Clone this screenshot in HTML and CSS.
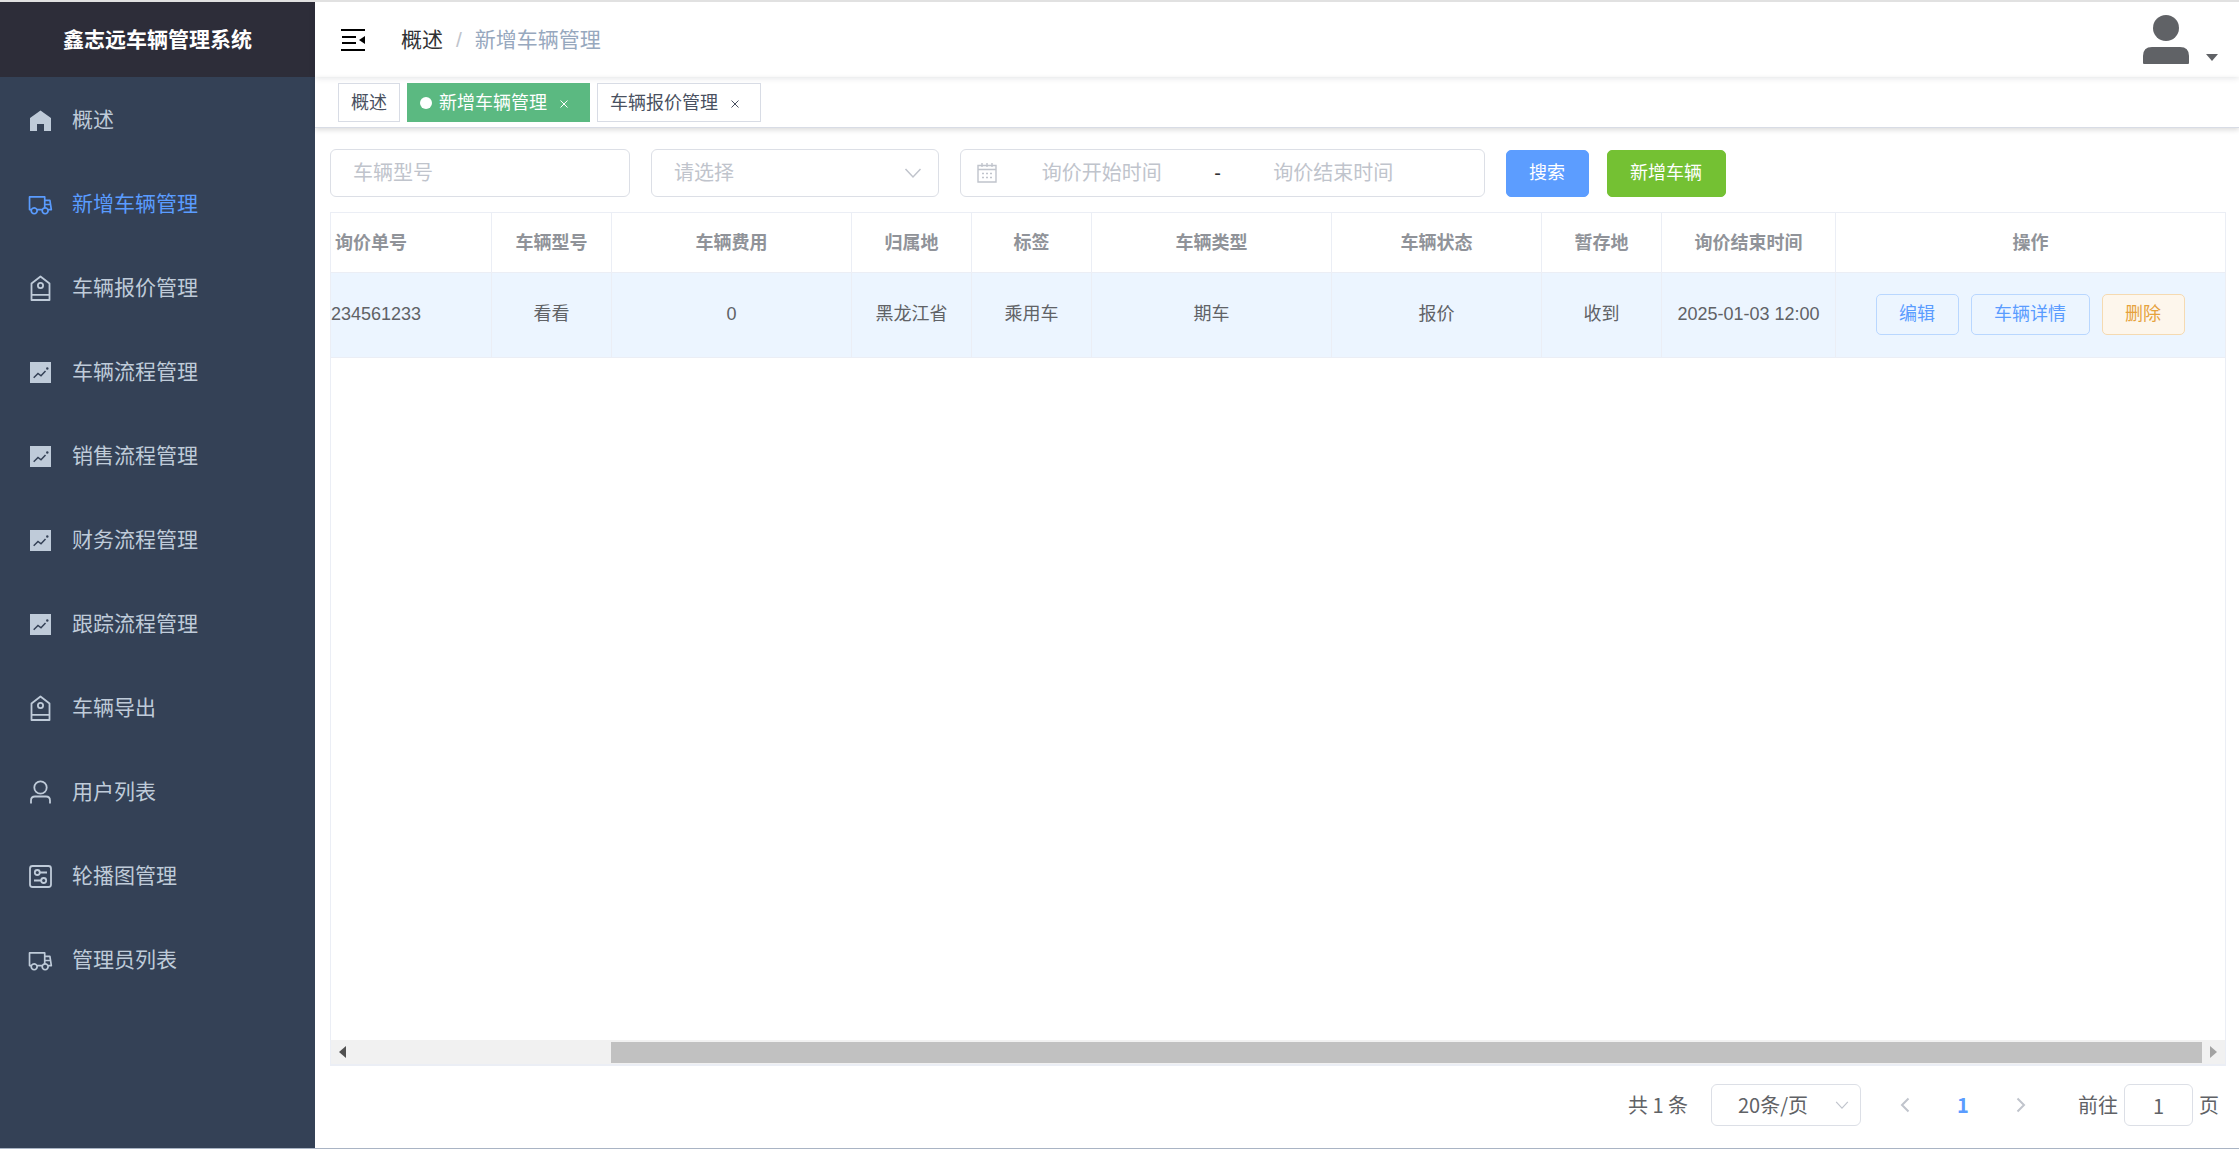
FILE: index.html
```html
<!DOCTYPE html>
<html lang="zh-CN">
<head>
<meta charset="utf-8">
<title>鑫志远车辆管理系统</title>
<link rel="stylesheet" href="styles.css">
</head>
<body>
<svg class="sprite" aria-hidden="true">
  <symbol id="i-home" viewBox="0 0 27 27"><path fill="currentColor" d="M13.500 3.500 24 11v13h-7v-7h-7v7H3V11z"/></symbol>
  <symbol id="i-van" viewBox="0 0 1024 1024"><path fill="currentColor" d="M128.896 736H96a32 32 0 0 1-32-32V224a32 32 0 0 1 32-32h576a32 32 0 0 1 32 32v96h164.544a32 32 0 0 1 31.616 27.136l54.144 352A32 32 0 0 1 922.688 736h-91.520a144 144 0 1 1-286.272 0H415.104a144 144 0 1 1-286.272 0zm23.360-64a143.872 143.872 0 0 1 239.488 0H568.320c17.088-25.600 42.240-45.376 71.744-55.808V256H128v416zm655.488 0h77.632l-19.648-128H704v64.896A144 144 0 0 1 807.744 672zm48.128-192-14.720-96H704v96h151.872zM688 832a80 80 0 1 0 0-160 80 80 0 0 0 0 160zm-416 0a80 80 0 1 0 0-160 80 80 0 0 0 0 160z"/></symbol>
  <symbol id="i-tag" viewBox="0 0 27 27"><g fill="none" stroke="currentColor" stroke-width="1.800" stroke-linejoin="round"><path d="M13.500 1.500 22.500 8.500V25h-18V8.500z M4.500 19.800h18"/><circle cx="13.500" cy="10.500" r="2.600"/></g></symbol>
  <symbol id="i-chart" viewBox="0 0 27 27"><path fill="currentColor" d="M3 3h21v21H3z"/><path fill="none" stroke="#344156" stroke-width="1.500" d="m6.700 18.800 4.300-4.300 3 2.300 4.500-4.700"/><circle cx="20.300" cy="9.500" r="1.200" fill="#344156"/></symbol>
  <symbol id="i-user" viewBox="0 0 27 27"><g fill="none" stroke="currentColor" stroke-width="1.800"><circle cx="13.500" cy="8.500" r="6.200"/><path d="M4 24.500v-3q0-4 4-4h11q4 0 4 4v3"/></g></symbol>
  <symbol id="i-setup" viewBox="0 0 27 27"><g fill="none" stroke="currentColor" stroke-width="1.800"><rect x="3" y="3" width="21" height="21" rx="2.500"/><circle cx="10.300" cy="9.500" r="2.500"/><path d="M12.800 9.500H20M7 17.500h7.200"/><circle cx="16.700" cy="17.500" r="2.500"/></g></symbol>
  <symbol id="i-x" viewBox="0 0 8 8"><path fill="none" stroke="currentColor" d="m.5.5 7 7m0-7-7 7"/></symbol>
  <symbol id="i-down" viewBox="0 0 18 18"><path fill="none" stroke="currentColor" stroke-width="1.500" d="m1.500 5 7.500 8 7.500-8"/></symbol>
</svg>

<aside class="sidebar">
  <h1 class="logo">鑫志远车辆管理系统</h1>
  <nav class="menu">
    <a href="#"><svg><use href="#i-home"/></svg>概述</a>
    <a href="#" class="active"><svg><use href="#i-van"/></svg>新增车辆管理</a>
    <a href="#"><svg><use href="#i-tag"/></svg>车辆报价管理</a>
    <a href="#"><svg><use href="#i-chart"/></svg>车辆流程管理</a>
    <a href="#"><svg><use href="#i-chart"/></svg>销售流程管理</a>
    <a href="#"><svg><use href="#i-chart"/></svg>财务流程管理</a>
    <a href="#"><svg><use href="#i-chart"/></svg>跟踪流程管理</a>
    <a href="#"><svg><use href="#i-tag"/></svg>车辆导出</a>
    <a href="#"><svg><use href="#i-user"/></svg>用户列表</a>
    <a href="#"><svg><use href="#i-setup"/></svg>轮播图管理</a>
    <a href="#"><svg><use href="#i-van"/></svg>管理员列表</a>
  </nav>
</aside>

<div class="page">
  <header class="navbar">
    <button class="fold" aria-label="收起菜单">
      <svg width="24" height="22" viewBox="0 0 24 22"><path d="M0 0h24v2H0zM1 7h14v2H1zM1 13h14v2H1zM0 20h24v2H0zM24 7v8l-6-4z"/></svg>
    </button>
    <nav class="crumbs"><a href="#">概述</a><span class="sep">/</span><span>新增车辆管理</span></nav>
    <button class="avatar" aria-label="用户菜单">
      <svg width="46" height="49" viewBox="0 0 46 49"><circle cx="23" cy="13" r="13"/><path d="M0 48V41q0-9 9-9h28q9 0 9 9v7q0 1-1 1H1q-1 0-1-1z"/></svg>
      <svg width="12" height="7" viewBox="0 0 12 7"><path d="M0 0h12L6 7z"/></svg>
    </button>
  </header>

  <nav class="tags">
    <a href="#" class="tag">概述</a>
    <a href="#" class="tag active"><i class="dot"></i>新增车辆管理<svg><use href="#i-x"/></svg></a>
    <a href="#" class="tag">车辆报价管理<svg><use href="#i-x"/></svg></a>
  </nav>

  <main class="content">
    <form class="filters">
      <input class="field model" type="text" placeholder="车辆型号" aria-label="车辆型号">
      <div class="select state">
        <select class="field" aria-label="请选择"><option>请选择</option></select>
        <svg><use href="#i-down"/></svg>
      </div>
      <div class="field range">
        <svg width="20" height="20" viewBox="0 0 20 20"><g fill="none" stroke="currentColor" stroke-width="1.400"><path d="M1 2.500h18V19H1zM1 6.500h18M5 0v4M10 0v4M15 0v4"/><path stroke-dasharray="2 2" d="M5 10.500h10M5 14.500h10"/></g></svg>
        <input type="text" placeholder="询价开始时间" aria-label="询价开始时间">
        <span>-</span>
        <input type="text" placeholder="询价结束时间" aria-label="询价结束时间">
      </div>
      <div class="actions">
        <button type="button" class="btn primary">搜索</button>
        <button type="button" class="btn success">新增车辆</button>
      </div>
    </form>

    <section class="table-box">
      <div class="table-body">
        <table>
          <colgroup><col class="c-no"><col class="c-s"><col class="c-l"><col class="c-s"><col class="c-s"><col class="c-l"><col class="c-m"><col class="c-s"><col class="c-time"><col></colgroup>
          <thead>
            <tr><th class="no">询价单号</th><th>车辆型号</th><th>车辆费用</th><th>归属地</th><th>标签</th><th>车辆类型</th><th>车辆状态</th><th>暂存地</th><th>询价结束时间</th><th>操作</th></tr>
          </thead>
          <tbody>
            <tr><td class="no">234561233</td><td>看看</td><td>0</td><td>黑龙江省</td><td>乘用车</td><td>期车</td><td>报价</td><td>收到</td><td>2025-01-03 12:00</td>
              <td><div class="ops"><button class="btn plain">编辑</button><button class="btn plain">车辆详情</button><button class="btn warn">删除</button></div></td></tr>
          </tbody>
        </table>
      </div>
      <div class="scrollbar">
        <svg width="7" height="12" viewBox="0 0 7 12"><path fill="#505050" d="M7 0v12L0 6z"/></svg>
        <div class="track"><div class="thumb"></div></div>
        <svg width="7" height="12" viewBox="0 0 7 12"><path fill="#a3a3a3" d="M0 0v12l7-6z"/></svg>
      </div>
    </section>

    <footer class="pager">
      <span>共 1 条</span>
      <div class="select size">
        <select class="field" aria-label="每页条数"><option>20条/页</option></select>
        <svg><use href="#i-down"/></svg>
      </div>
      <div class="pages">
        <button aria-label="上一页"><svg width="10" height="16" viewBox="0 0 10 16"><path d="M8.500 1.500 2 8l6.500 6.500"/></svg></button>
        <button class="current">1</button>
        <button aria-label="下一页"><svg width="10" height="16" viewBox="0 0 10 16"><path d="M1.500 1.500 8 8l-6.500 6.500"/></svg></button>
      </div>
      <label class="jump">前往<input class="field" type="text" value="1">页</label>
    </footer>
  </main>
</div>
</body>
</html>
```
FILE: styles.css
```css
* { box-sizing: border-box; }

body {
  margin: 0;
  min-height: 100vh;
  display: grid;
  grid-template-columns: 315px minmax(0, 1fr);
  border-top: 2px solid #e1e1e1;
  border-bottom: 1px solid #a9b4c4;
  background: #fff;
  color: #606266;
  font: 18px/24px "Liberation Sans", "Noto Sans CJK SC", sans-serif;
}

a { color: inherit; text-decoration: none; }
button, input, select { font: inherit; color: inherit; margin: 0; }
button { border: 0; padding: 0; background: none; cursor: pointer; }
svg { display: block; flex: none; }
.sprite { position: absolute; width: 0; height: 0; }

/* sidebar */
.sidebar { background: #344156; }
.logo {
  margin: 0;
  height: 75px;
  background: #2d2d39;
  color: #fff;
  font-size: 21px;
  line-height: 75px;
  text-align: center;
}
.menu { padding-top: 1px; font-size: 21px; }
.menu a {
  display: flex;
  align-items: center;
  gap: 18px;
  height: 84px;
  padding-left: 27px;
  color: #bfcbd9;
}
.menu a.active { color: #5a9cff; }
.menu svg { width: 27px; height: 27px; }

/* top bar */
.page { display: flex; flex-direction: column; min-width: 0; }
.navbar {
  display: flex;
  align-items: center;
  height: 75px;
  padding: 0 21px 0 26px;
  box-shadow: 0 1px 6px rgba(0, 21, 41, .12);
}
.fold svg { fill: #000; }
.crumbs { display: flex; gap: 13px; margin-left: 36px; font-size: 21px; color: #97a8be; }
.crumbs a { color: #303133; }
.crumbs .sep { color: #c0c4cc; }
.avatar { display: flex; align-items: flex-end; gap: 17px; margin-left: auto; }
.avatar svg { fill: #606266; }
.avatar svg + svg { margin-bottom: 3px; }

.tags {
  display: flex;
  gap: 7px;
  height: 51px;
  padding: 6px 23px;
  border-bottom: 1px solid #d8dce5;
  box-shadow: 0 2px 5px rgba(0, 0, 0, .14);
}
.tag {
  display: flex;
  align-items: center;
  height: 39px;
  padding: 0 12px;
  border: 1px solid #d8dce5;
  background: #fff;
  color: #495060;
}
.tag.active { background: #5bb981; border-color: #5bb981; color: #fff; }
.tag .dot { width: 12px; height: 12px; margin-right: 7px; border-radius: 50%; background: #fff; }
.tag svg { width: 8px; height: 8px; margin: 2px 9px 0 13px; }

/* filters */
.content { flex: 1; display: flex; flex-direction: column; padding: 21px 13px 22px 15px; }
.field {
  height: 48px;
  border: 1px solid #dcdfe6;
  border-radius: 6px;
  background: #fff;
  outline: 0;
}
.filters { display: flex; align-items: center; gap: 21px; font-size: 20px; }
.filters ::placeholder { color: #c0c4cc; opacity: 1; }
.model { width: 300px; padding: 0 22px; }
.select { display: grid; align-items: center; color: #c0c4cc; }
.select > * { grid-area: 1 / 1; }
.select select { width: 100%; appearance: none; padding: 0 22px; }
.select svg { justify-self: end; width: 18px; height: 18px; margin-right: 17px; pointer-events: none; }
.state { width: 288px; }
.range { display: flex; align-items: center; width: 525px; padding: 0 49px 0 16px; color: #c0c4cc; }
.range input { flex: 1; min-width: 0; border: 0; outline: 0; padding: 0; text-align: center; background: none; }
.range svg { margin-right: 3px; }
.range span { width: 28px; text-align: center; color: #303133; }
.actions { display: flex; gap: 18px; }
.btn { padding: 0 22px; height: 41px; border: 1px solid; border-radius: 5px; font-size: 18px; }
.actions .btn { padding: 0 23px 0 22px; height: 47px; color: #fff; }
.btn.primary { background: #5c9dff; border-color: #5c9dff; }
.btn.success { background: #74c133; border-color: #74c133; }
.btn.plain { background: #ecf5ff; border-color: #b9d7ff; color: #5a9cff; }
.btn.warn { background: #fdf6ec; border-color: #f5dab1; color: #e6a23c; }

/* table */
.table-box {
  flex: 1;
  display: flex;
  flex-direction: column;
  margin-top: 15px;
  border: 1px solid #ebeef5;
  border-bottom-width: 2px;
}
.table-body { flex: 1; overflow: hidden; }
table { width: 100%; table-layout: fixed; border-spacing: 0; }
.c-no { width: 161px; }
.c-s { width: 120px; }
.c-m { width: 210px; }
.c-l { width: 240px; }
.c-time { width: 174px; }
th, td { padding: 0; border: 0 solid #ebeef5; border-width: 0 1px 1px 0; text-align: center; white-space: nowrap; }
th:last-child, td:last-child { border-right: 0; }
th { height: 60px; color: #909399; }
td { height: 85px; padding-bottom: 2px; background: #ecf5ff; }
th.no { text-align: left; padding-left: 4px; }
td.no { text-align: left; }
.ops { display: flex; justify-content: center; gap: 12px; }
.ops .btn { padding: 0 23px 0 22px; }

.scrollbar { display: flex; align-items: center; gap: 8px; height: 24px; padding: 0 8px; background: #f1f1f1; }
.track { flex: 1; padding-left: 257px; }
.thumb { height: 21px; background: #c1c1c1; }

/* pagination */
.pager {
  display: flex;
  align-items: center;
  justify-content: flex-end;
  margin-top: 18px;
  padding-right: 7px;
  font-family: "Noto Sans CJK SC", sans-serif;
  font-size: 20px;
}
.pager .field { height: 42px; }
.size { width: 150px; margin-left: 23px; }
.size select { padding: 0 26px; color: #606266; }
.size svg { width: 14px; height: 14px; margin-right: 12px; }
.pages { display: flex; margin: 0 28px 0 15px; }
.pages button { display: grid; place-items: center; width: 58px; height: 42px; }
.pages svg { fill: none; stroke: #c0c4cc; stroke-width: 2; }
.pages .current { color: #5a9cff; font-weight: bold; }
.jump { display: flex; align-items: center; gap: 6px; }
.jump input { width: 69px; padding: 0; text-align: center; }
```
